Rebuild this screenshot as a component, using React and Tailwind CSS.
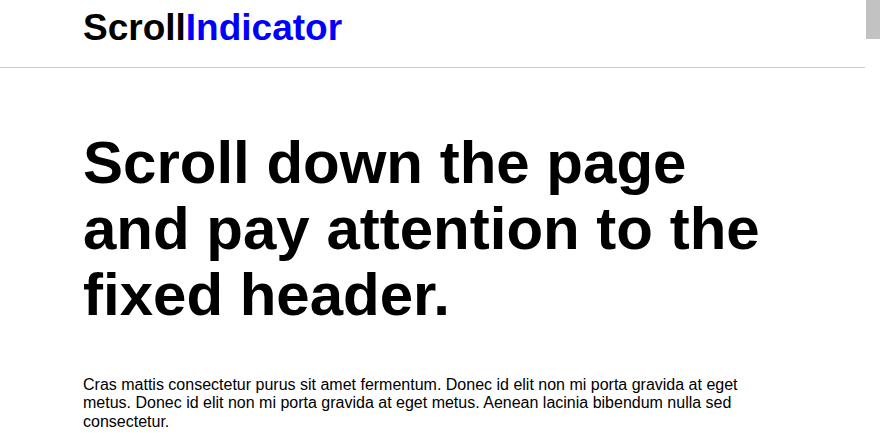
export default function App() {
  return (
    <div className="flex h-[440px] w-[880px] overflow-hidden bg-white font-['Liberation_Sans',Arial,sans-serif] text-black">
      {/* page */}
      <div className="flex w-[865px] flex-col">
        <header className="h-[68px] border-b border-[#cccccc]">
          <div className="mx-auto w-[699px] pt-[7px]">
            <h1 className="text-[37px] font-bold leading-[42px]">
              Scroll<span className="text-[#0000ff]">Indicator</span>
            </h1>
          </div>
        </header>

        <main className="mx-auto w-[699px] pt-[62px]">
          <h2 className="text-[60px] font-bold leading-[66px]">
            Scroll down the page and pay attention to the fixed header.
          </h2>
          <p className="mt-[48px] text-[16px] leading-[18.4px]">
            Cras mattis consectetur purus sit amet fermentum. Donec id elit non
            mi porta gravida at eget metus. Donec id elit non mi porta gravida at
            eget metus. Aenean lacinia bibendum nulla sed consectetur.
          </p>
        </main>
      </div>

      {/* scrollbar */}
      <div className="w-[15px] bg-white">
        <div className="ml-[1px] h-[39px] w-[14px] bg-[#c2c2c2]" />
      </div>
    </div>
  );
}
